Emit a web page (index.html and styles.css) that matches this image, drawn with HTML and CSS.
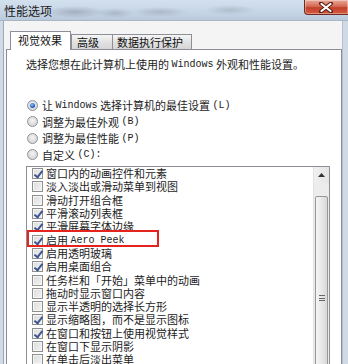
FILE: index.html
```html
<!DOCTYPE html>
<html lang="zh-CN">
<head>
<meta charset="utf-8">
<title>性能选项</title>
<link rel="stylesheet" href="styles.css">
</head>
<body>
<div class="window">
  <div class="titlebar">
    <span class="title">性能选项</span>
    <div class="close">
      <svg width="16" height="11" viewBox="0 0 16 11"><path d="M3 1.5 L13 9.5 M13 1.5 L3 9.5" stroke="#5a1c14" stroke-width="4" stroke-linecap="round"/><path d="M3.5 2 L12.5 9 M12.5 2 L3.5 9" stroke="#fff" stroke-width="2.2" stroke-linecap="round"/></svg>
    </div>
  </div>
  <div class="frame">
    <div class="dialog">
      <div class="tabs">
        <div class="tab active">视觉效果</div>
        <div class="tab">高级</div>
        <div class="tab">数据执行保护</div>
      </div>
      <div class="panel">
        <p class="desc">选择您想在此计算机上使用的 <span class="mono">Windows</span> 外观和性能设置。</p>
        <div class="radios">
          <div class="radio-row"><span class="radio on"></span>让 <span class="mono">Windows</span> 选择计算机的最佳设置 <span class="mono">(L)</span></div>
          <div class="radio-row"><span class="radio"></span>调整为最佳外观 <span class="mono">(B)</span></div>
          <div class="radio-row"><span class="radio"></span>调整为最佳性能 <span class="mono">(P)</span></div>
          <div class="radio-row"><span class="radio"></span>自定义 <span class="mono">(C):</span></div>
        </div>
        <div class="listbox">
          <div class="items">
            <div class="item"><span class="cb on"></span>窗口内的动画控件和元素</div>
            <div class="item"><span class="cb"></span>淡入淡出或滑动菜单到视图</div>
            <div class="item"><span class="cb"></span>滑动打开组合框</div>
            <div class="item"><span class="cb on"></span>平滑滚动列表框</div>
            <div class="item"><span class="cb on"></span>平滑屏幕字体边缘</div>
            <div class="item marked"><span class="cb on"></span>启用 <span class="mono">Aero Peek</span><span class="highlight"></span></div>
            <div class="item"><span class="cb on"></span>启用透明玻璃</div>
            <div class="item"><span class="cb on"></span>启用桌面组合</div>
            <div class="item"><span class="cb"></span>任务栏和「开始」菜单中的动画</div>
            <div class="item"><span class="cb"></span>拖动时显示窗口内容</div>
            <div class="item"><span class="cb"></span>显示半透明的选择长方形</div>
            <div class="item"><span class="cb on"></span>显示缩略图，而不是显示图标</div>
            <div class="item"><span class="cb on"></span>在窗口和按钮上使用视觉样式</div>
            <div class="item"><span class="cb"></span>在窗口下显示阴影</div>
            <div class="item"><span class="cb"></span>在单击后淡出菜单</div>
          </div>
          <div class="scrollbar">
            <div class="arrow"><svg width="7" height="4" viewBox="0 0 7 4"><path d="M0 4 L3.5 0 L7 4 Z" fill="#333"/></svg></div>
            <div class="track"></div>
            <div class="thumb"><span class="grip"></span></div>
          </div>
        </div>
      </div>
    </div>
  </div>
</div>
</body>
</html>
```
FILE: styles.css
```css
* { box-sizing: border-box; }
html, body { margin: 0; padding: 0; }
body {
  width: 348px;
  height: 364px;
  overflow: hidden;
  background: #f4f4f4;
  font-family: "Noto Sans CJK SC", "Noto Sans", sans-serif;
  font-size: 11px;
  color: #1c1c1c;
}
.window { width: 348px; }
.titlebar {
  height: 21px;
  display: flex;
  align-items: flex-start;
  background:
    radial-gradient(ellipse 30px 6px at 75px 12px, rgba(120,130,145,0.45), transparent),
    radial-gradient(ellipse 20px 5px at 115px 13px, rgba(120,130,145,0.35), transparent),
    radial-gradient(ellipse 28px 5px at 160px 12px, rgba(120,130,145,0.35), transparent),
    radial-gradient(ellipse 25px 5px at 230px 10px, rgba(120,130,145,0.3), transparent),
    linear-gradient(#d3e0ee, #c4d3e4 70%, #b9c9dc);
  border-bottom: 1px solid #a9b6c6;
}
.title {
  padding: 3px 0 0 4px;
  font-size: 12px;
  line-height: 15px;
  color: #1a1a1a;
}
.close {
  margin-left: auto;
  width: 44px;
  height: 15px;
  display: flex;
  align-items: center;
  justify-content: center;
  padding-right: 2px;
  background: linear-gradient(#e9a899, #d66a55 45%, #c2402b 55%, #d45a40);
  border: 1px solid #6f2a20;
  border-top: none;
  border-right: none;
  border-bottom-left-radius: 4px;
  box-shadow: inset 0 0 0 1px rgba(255,255,255,0.35);
}
.frame {
  background: #cfdae6;
  padding-left: 3px;
  padding-right: 5px;
  height: 343px;
}
.dialog {
  background: #f4f4f4;
  border-left: 1px solid #9fa9b5;
  border-right: 1px solid #b6bfca;
  height: 100%;
  padding-top: 10px;
  padding-left: 1px;
}
.tabs {
  display: flex;
  align-items: flex-end;
  padding-left: 5px;
  height: 18px;
  position: relative;
  z-index: 1;
}
.tab {
  height: 15px;
  line-height: 14px;
  padding: 0 5px;
  border: 1px solid #8c8f97;
  border-bottom: none;
  margin-right: -1px;
  background: linear-gradient(#f6f6f6, #e2e2e2 50%, #d6d6d6);
  color: #111;
  overflow: hidden;
}
.tab:nth-child(2) { width: 42px; }
.tab:nth-child(3) { width: 80px; padding-left: 4px; }
.tab.active {
  height: 19px;
  width: 61px;
  line-height: 17px;
  padding-left: 7px;
  background: #fff;
  margin-bottom: -1px;
  margin-right: 0;
  border-color: #8c8f97;
}
.panel {
  margin-left: 1px;
  width: 336px;
  height: 330px;
  background: #fff;
  border: 1px solid #8c8f97;
  padding: 7px 0 0 19px;
}
.desc {
  margin: 0 0 25px 0;
  height: 15px;
  line-height: 15px;
  display: flex;
  align-items: center;
  white-space: pre;
}
.mono {
  font-family: "Liberation Mono", "DejaVu Sans Mono", monospace;
  font-size: 10px;
}
.radios { display: flex; flex-direction: column; }
.radio-row {
  height: 16.5px;
  display: flex;
  align-items: center;
  white-space: pre;
  padding-left: 1px;
}
.radio {
  width: 11px;
  height: 11px;
  border-radius: 50%;
  border: 1px solid #8e9299;
  background: radial-gradient(circle at 50% 40%, #f4f4f4, #d8d8d8 70%, #c9c9c9);
  margin-right: 4px;
  flex: none;
  position: relative;
}
.radio.on::after {
  content: "";
  position: absolute;
  left: 2px; top: 2px;
  width: 5px; height: 5px;
  border-radius: 50%;
  background: radial-gradient(circle at 40% 35%, #8fc4f5, #1e62c8 60%, #123f8c);
}
.listbox {
  margin-top: 3px;
  width: 304px;
  height: 200px;
  border: 1px solid #8c8f97;
  display: flex;
  background: #fff;
}
.items { flex: 1; padding-left: 5px; }
.item {
  height: 13.3px;
  display: flex;
  align-items: center;
  white-space: pre;
  line-height: 13px;
}
.marked { position: relative; }
.highlight {
  position: absolute;
  left: -5px;
  top: -3.5px;
  width: 132px;
  height: 17px;
  border: 2px solid #e5231e;
}
.cb {
  width: 11px;
  height: 11px;
  border: 1px solid #8e8f8f;
  background: linear-gradient(135deg, #dcdcdc, #f2f2f2);
  box-shadow: inset 0 0 0 1px #f6f6f6;
  margin-right: 3px;
  flex: none;
  position: relative;
}
.cb.on::after {
  content: "";
  position: absolute;
  left: 3px; top: 0px;
  width: 3px; height: 7px;
  border: solid #3d5591;
  border-width: 0 2px 2px 0;
  transform: rotate(38deg);
}
.scrollbar {
  width: 16px;
  background: #ececec;
  border-left: 1px solid #e2e2e2;
  display: flex;
  flex-direction: column;
}
.arrow {
  height: 16px;
  display: flex;
  align-items: center;
  justify-content: center;
  background: linear-gradient(90deg, #f0f0f0, #e4e4e4);
}
.track { height: 13px; }
.thumb {
  flex: 1;
  margin: 0 1px;
  border: 1px solid #979797;
  border-radius: 2px 2px 0 0;
  background: linear-gradient(90deg, #f5f5f5, #e8e8e8 50%, #d8d8d8);
  display: flex;
  justify-content: center;
  padding-top: 98px;
}
.grip {
  width: 6px;
  height: 6px;
  border-top: 1px solid #666;
  border-bottom: 1px solid #666;
  position: relative;
}
.grip::after {
  content: "";
  position: absolute;
  left: 0; right: 0; top: 2px;
  border-top: 1px solid #666;
}
```
